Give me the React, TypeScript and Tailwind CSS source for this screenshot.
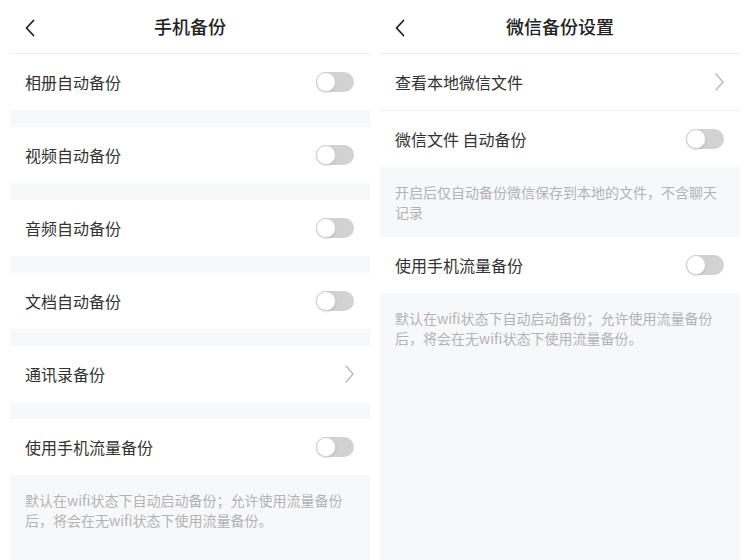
const font = { fontFamily: '"Noto Sans CJK SC", "Noto Sans", sans-serif' };

function BackArrow() {
  return (
    <svg width="12" height="18" viewBox="0 0 12 18" className="text-[#222]">
      <path d="M9.5 1.5 L2.5 9 L9.5 16.5" fill="none" stroke="currentColor" strokeWidth="1.8" strokeLinecap="round" strokeLinejoin="round" />
    </svg>
  );
}

function Chevron() {
  return (
    <svg width="9" height="18" viewBox="0 0 9 18" className="text-[#b8b8b8]">
      <path d="M1 1 L8 9 L1 17" fill="none" stroke="currentColor" strokeWidth="1.3" strokeLinecap="round" strokeLinejoin="round" />
    </svg>
  );
}

function Toggle() {
  return (
    <div className="w-[38px] h-[20px] rounded-full bg-[#d2d2d2] flex items-center">
      <div className="w-[20px] h-[20px] rounded-full bg-white border border-[#d0d0d0] shadow-[0_1px_2px_rgba(0,0,0,0.12)]" />
    </div>
  );
}

function Header({ title }: { title: string }) {
  return (
    <div className="relative h-[54px] border-b border-[#efefef] flex items-center justify-center bg-white">
      <div className="absolute left-[14px] top-[19px]">
        <BackArrow />
      </div>
      <span className="text-[18px] font-medium text-[#222]">{title}</span>
    </div>
  );
}

function Row({ label, kind, border }: { label: string; kind: "toggle" | "link"; border?: boolean }) {
  return (
    <div
      className={`h-[56px] flex items-center justify-between pl-[15px] pr-[16px] bg-white ${
        border ? "border-b border-[#efefef] box-content" : ""
      }`}
    >
      <span className="text-[16px] text-[#333]">{label}</span>
      {kind === "toggle" ? <Toggle /> : <Chevron />}
    </div>
  );
}

function Gap() {
  return <div className="h-[17px] bg-[#f7f8fa]" />;
}

function Note({ lines, grow }: { lines: string[]; grow?: boolean }) {
  return (
    <div className={`bg-[#f7f8fa] pt-[15px] pb-[15px] pl-[15px] pr-[12px] ${grow ? "flex-1" : ""}`}>
      {lines.map((l) => (
        <p key={l} className="text-[14px] leading-[20px] text-[#b3b3b3] whitespace-nowrap">
          {l}
        </p>
      ))}
    </div>
  );
}

export default function App() {
  return (
    <div className="w-[750px] h-[560px] bg-white flex gap-[10px] px-[10px] overflow-hidden" style={font}>
      <div className="w-[360px] h-[560px] flex flex-col">
        <Header title="手机备份" />
        <Row label="相册自动备份" kind="toggle" />
        <Gap />
        <Row label="视频自动备份" kind="toggle" />
        <Gap />
        <Row label="音频自动备份" kind="toggle" />
        <Gap />
        <Row label="文档自动备份" kind="toggle" />
        <Gap />
        <Row label="通讯录备份" kind="link" />
        <Gap />
        <Row label="使用手机流量备份" kind="toggle" />
        <Note grow lines={["默认在wifi状态下自动启动备份；允许使用流量备份", "后，将会在无wifi状态下使用流量备份。"]} />
      </div>
      <div className="w-[360px] h-[560px] flex flex-col">
        <Header title="微信备份设置" />
        <Row label="查看本地微信文件" kind="link" border />
        <Row label="微信文件 自动备份" kind="toggle" />
        <Note lines={["开启后仅自动备份微信保存到本地的文件，不含聊天", "记录"]} />
        <Row label="使用手机流量备份" kind="toggle" />
        <Note grow lines={["默认在wifi状态下自动启动备份；允许使用流量备份", "后，将会在无wifi状态下使用流量备份。"]} />
      </div>
    </div>
  );
}
